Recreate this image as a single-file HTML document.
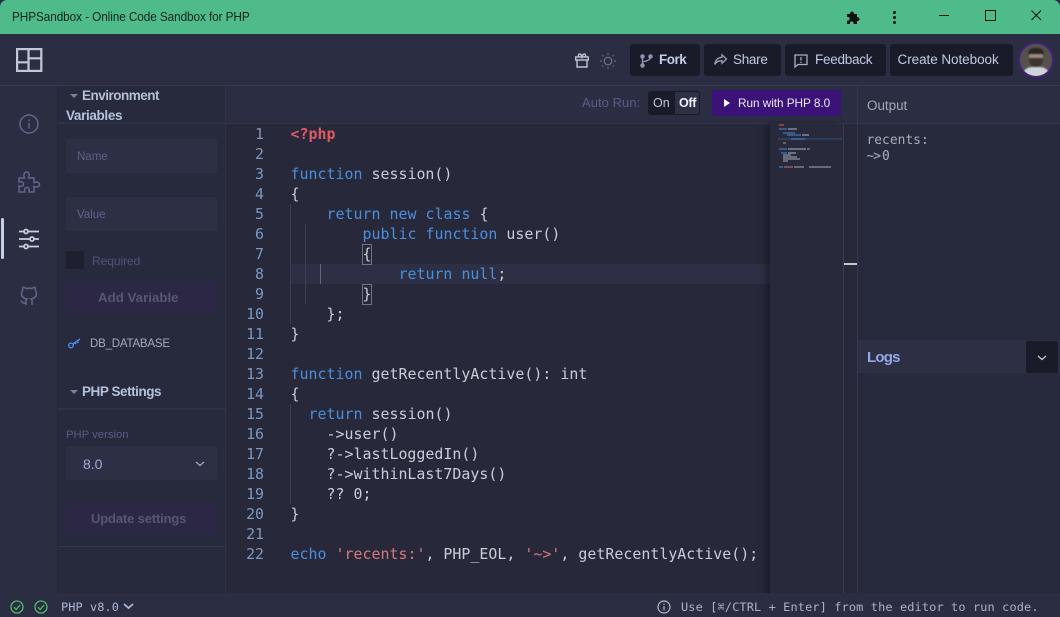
<!DOCTYPE html>
<html><head><meta charset="utf-8"><style>
html,body{margin:0;padding:0;background:#2b2e43}
body{width:1060px;height:616px;overflow:hidden;position:relative;font-family:"Liberation Sans",sans-serif}
.a{position:absolute}
.t{position:absolute;white-space:nowrap;line-height:20px}
.btn{position:absolute;top:44px;height:32px;background:#1a1b29;border-radius:3px}
.code{font-family:"DejaVu Sans Mono","Liberation Mono",monospace;font-size:14.9px;letter-spacing:.03px;white-space:pre;line-height:20px;height:20px;position:absolute;left:290.5px;color:#c9cdd8}
.n{position:absolute;width:40px;left:224px;text-align:right;font-family:"DejaVu Sans Mono",monospace;font-size:14.9px;line-height:20px;color:#7e97bd}
.k{color:#4b8fdc}
.s{color:#d9787c}
svg{position:absolute;overflow:visible}
</style></head><body>
<!-- title bar -->
<div class="a" style="left:0;top:0;width:1060px;height:34px;background:#4fbb8a;border-radius:7px 7px 0 0"></div>
<div class="t" style="left:12px;top:7px;font-size:12.6px;letter-spacing:-.1px;color:#10261d;transform:scaleX(.937);transform-origin:left center">PHPSandbox - Online Code Sandbox for PHP</div>
<svg style="left:846px;top:9px" width="16" height="16" viewBox="0 0 16 16"><path d="M1 5h3.2a1.9 1.900 0 1 1 3.600 0H11v3.300a1.900 1.900 0 1 1 0 3.600V15H7.500a1.900 1.900 0 1 0-3.500 0H1v-3.500a1.900 1.900 0 1 0 0-3.500z" fill="#111"/></svg>
<div class="a" style="left:893px;top:11px;width:3px;height:3px;background:#111;border-radius:2px;box-shadow:0 5px 0 #111,0 10px 0 #111"></div>
<div class="a" style="left:939px;top:15px;width:10px;height:1px;background:#111"></div>
<div class="a" style="left:985px;top:10px;width:9px;height:9px;border:1px solid #111"></div>
<svg style="left:1031px;top:10px" width="11" height="11"><path d="M.5.500l9.500 9.500M10 .500L.5 10" stroke="#111" fill="none"/></svg>

<!-- header -->
<div class="a" style="left:0;top:85px;width:1060px;height:1px;background:#363a50"></div>
<svg style="left:15px;top:47px" width="28" height="26"><g fill="none" stroke="#c2c8d6" stroke-width="2.200"><rect x="2.100" y="2.100" width="24.200" height="21.800"/><path d="M13.500 2v22M2 15.300h11.500M13.500 11.300h12.800"/></g></svg>
<svg style="left:575px;top:53px" width="14" height="15" viewBox="0 0 14 15"><g fill="none" stroke="#c0c5d3" stroke-width="1.400"><rect x=".7" y="4" width="12.600" height="3"/><path d="M2 7v7h10V7M4 4C2.500 2 4 .8 5 1c1.200.2 2 3 2 3s.8-2.800 2-3c1-.2 2.500 1 1 3"/></g></svg>
<svg style="left:600px;top:53px" width="16" height="16" viewBox="0 0 16 16"><g fill="none" stroke="#6f7390" stroke-width="1.200"><circle cx="8" cy="8" r="3.800"/><path d="M8 0v1.500M8 14.500V16M0 8h1.500M14.500 8H16M2.300 2.300l1 1M12.700 12.700l1 1M2.300 13.700l1-1M12.700 3.300l1-1"/></g></svg>

<div class="btn" style="left:630px;width:70px"></div>
<svg style="left:640px;top:54px" width="13" height="14" viewBox="0 0 13 14"><g fill="none" stroke="#8d92ad" stroke-width="1.500"><circle cx="2.500" cy="2.500" r="1.500" fill="#8d92ad"/><circle cx="2.500" cy="11.500" r="1.500" fill="#8d92ad"/><circle cx="10.500" cy="2.500" r="1.500" fill="#8d92ad"/><path d="M2.500 3v7M10.500 3c0 3-4 4-8 5"/></g></svg>
<div class="t" style="left:659px;top:50px;font-size:13.5px;font-weight:bold;letter-spacing:-.5px;color:#c2cfe6">Fork</div>
<div class="btn" style="left:704px;width:77px"></div>
<svg style="left:714px;top:54px" width="13" height="12" viewBox="0 0 13 12"><path d="M8 .800L12.500 5 8 9.200V6.700C5 6.600 2.500 7.500 .8 10.500 1.200 6.500 3.500 3.700 8 3.300z" fill="none" stroke="#9ba1ba" stroke-width="1.300"/></svg>
<div class="t" style="left:733px;top:50px;font-size:13.5px;letter-spacing:-.3px;color:#bfcbe2">Share</div>
<div class="btn" style="left:785px;width:101px"></div>
<svg style="left:794px;top:54px" width="14" height="14" viewBox="0 0 14 14"><path d="M1 1h12v9.500H4L1 13z" fill="none" stroke="#a9afc6" stroke-width="1.300"/><path d="M7 3v3.500M7 7.700v1.300" stroke="#a9afc6" stroke-width="1.300"/></svg>
<div class="t" style="left:815px;top:50px;font-size:13.5px;letter-spacing:-.25px;color:#bfcbe2">Feedback</div>
<div class="btn" style="left:890px;width:123px"></div>
<div class="t" style="left:897.500px;top:50px;font-size:13.5px;letter-spacing:-.06px;color:#bfcbe2">Create Notebook</div>
<div class="a" style="left:1018px;top:42px;width:32px;height:32px;border:2px solid #40227a;border-radius:50%;overflow:hidden;background:#55524e">
<div style="position:absolute;inset:0;filter:blur(.8px)">
<div class="a" style="left:9px;top:5px;width:14px;height:17px;border-radius:50%;background:#a0897c"></div>
<div class="a" style="left:8px;top:4px;width:16px;height:6px;border-radius:7px 7px 0 0;background:#2a2623"></div>
<div class="a" style="left:9px;top:14px;width:14px;height:9px;border-radius:0 0 8px 8px;background:#3f3530"></div>
<div class="a" style="left:2px;top:23px;width:28px;height:12px;border-radius:10px 10px 0 0;background:#d0d4d6"></div>
</div></div>

<!-- left nav -->
<div class="a" style="left:0;top:86px;width:58px;height:518px;background:#2b2e43"></div>
<div class="a" style="left:57px;top:86px;width:1px;height:518px;background:#24263a"></div>
<svg style="left:19px;top:114px" width="20" height="20" viewBox="0 0 20 20"><g fill="none" stroke="#62658a" stroke-width="1.500"><circle cx="10" cy="10" r="9"/><path d="M10 9v5.500M10 5.500v1.600"/></g></svg>
<svg style="left:18px;top:171px" width="22" height="22" viewBox="0 0 22 22"><path d="M1 7h5.500C5 3 6.500 1 8.500 1s3.500 2 2 6H16v4.500c3-1.300 5.500 0 5.500 2s-2.500 3.300-5.500 2V21h-5c.8-3-.3-4.500-2.200-4.500S6 18 6.800 21H1v-6c3 1 4.500-.3 4.500-2S4 10 1 11z" fill="none" stroke="#62658a" stroke-width="1.500"/></svg>
<div class="a" style="left:1px;top:218px;width:3px;height:41px;background:#c5d0e0;border-radius:2px"></div>
<svg style="left:19px;top:229px" width="20" height="20" viewBox="0 0 20 20"><g stroke="#c8d0de" stroke-width="1.700" fill="#2b2e43"><path d="M0 2.500h20M0 10h20M0 17.500h20"/><circle cx="7" cy="2.500" r="2"/><circle cx="13" cy="10" r="2"/><circle cx="7" cy="17.500" r="2"/></g></svg>
<svg style="left:20px;top:286px" width="18" height="20" viewBox="0 0 18 20"><path d="M6 19v-3.500c-.3-1 .3-2 1-2.500C4 12.500 1.500 11 1.500 7.500c0-1.300.5-2.300 1.200-3.200-.2-1-.1-2 .3-3 1.300 0 2.300.6 3.200 1.300a9 9 0 0 1 5.600 0C12.700 1.900 13.700 1.300 15 1.300c.4 1 .5 2 .3 3 .7.900 1.200 1.900 1.200 3.200 0 3.500-2.500 5-5.500 5.500.7.500 1.300 1.500 1 2.500V19M6 17c-2.500.7-4-.5-5-2.500" fill="none" stroke="#62658a" stroke-width="1.500"/></svg>

<!-- sidebar -->
<div class="a" style="left:58px;top:86px;width:167px;height:518px;background:#272a3c"></div>
<div class="a" style="left:225px;top:86px;width:1px;height:518px;background:#2f3248"></div>
<div class="a" style="left:58px;top:122px;width:167px;height:2px;background:#2e3147"></div>
<div class="a" style="left:70px;top:94px;border:4px solid transparent;border-top:4px solid #7c7f99"></div>
<div class="t" style="left:82px;top:86px;font-size:13.500px;font-weight:bold;letter-spacing:-.5px;color:#b5bfd6">Environment</div>
<div class="t" style="left:66px;top:106px;font-size:13.500px;font-weight:bold;letter-spacing:-.35px;color:#b5c3de">Variables</div>
<div class="a" style="left:66px;top:139px;width:151px;height:34px;background:#2d3045;border-radius:2px"></div>
<div class="t" style="left:77px;top:147px;font-size:11.500px;color:#5d6288">Name</div>
<div class="a" style="left:66px;top:197px;width:151px;height:34px;background:#2d3045;border-radius:2px"></div>
<div class="t" style="left:77px;top:205px;font-size:11.500px;color:#5d6288">Value</div>
<div class="a" style="left:66px;top:251px;width:18px;height:18px;background:#1e1f2f;border-radius:2px"></div>
<div class="t" style="left:92px;top:251px;font-size:12px;letter-spacing:-.05px;color:#50547a">Required</div>
<div class="a" style="left:66px;top:282px;width:151px;height:31px;background:#2b2745;border-radius:2px"></div>
<div class="t" style="left:98px;top:288px;font-size:13.300px;font-weight:bold;letter-spacing:0;color:#565870">Add Variable</div>
<svg style="left:68px;top:338px" width="13" height="11" viewBox="0 0 13 11"><g fill="none" stroke="#4d8ce8" stroke-width="1.400"><circle cx="3" cy="7.500" r="2.300"/><path d="M5 6l7-5M9 3.500l1.500 1.500M7 5l1 1"/></g></svg>
<div class="t" style="left:90px;top:334px;font-size:11.500px;letter-spacing:-.2px;color:#a3aaba">DB_DATABASE</div>
<div class="a" style="left:70px;top:390px;border:4px solid transparent;border-top:4px solid #7c7f99"></div>
<div class="t" style="left:82px;top:382px;font-size:13.500px;font-weight:bold;letter-spacing:-.45px;color:#b5c1da">PHP Settings</div>
<div class="a" style="left:58px;top:408px;width:167px;height:2px;background:#2e3147"></div>
<div class="t" style="left:66px;top:425px;font-size:11.300px;color:#575c82">PHP version</div>
<div class="a" style="left:66px;top:446px;width:151px;height:34px;background:#2d3045;border-radius:2px"></div>
<div class="t" style="left:83px;top:454px;font-size:14px;color:#a4aad6">8.0</div>
<svg style="left:195px;top:461px" width="10" height="6"><path d="M1 1l4 3.500L9 1" fill="none" stroke="#a8acc8" stroke-width="1.200"/></svg>
<div class="a" style="left:66px;top:503px;width:151px;height:31px;background:#2b2745;border-radius:2px"></div>
<div class="t" style="left:91px;top:509px;font-size:13px;font-weight:bold;letter-spacing:-.15px;color:#565870">Update settings</div>
<div class="a" style="left:58px;top:546px;width:167px;height:1px;background:#33364d"></div>

<!-- editor toolbar -->
<div class="a" style="left:226px;top:86px;width:631px;height:37px;background:#2b2e43"></div>
<div class="a" style="left:226px;top:123px;width:631px;height:1px;background:#32354b"></div>
<div class="t" style="left:582px;top:93px;font-size:13px;letter-spacing:.05px;color:#585d85">Auto Run:</div>
<div class="a" style="left:648px;top:91px;width:52px;height:24px;background:#1a1b29;border-radius:3px"></div>
<div class="a" style="left:675px;top:92px;width:24px;height:22px;background:#2e3146;border-radius:0 2px 2px 0"></div>
<div class="t" style="left:653px;top:93px;font-size:12.500px;color:#bfc7da">On</div>
<div class="t" style="left:679px;top:93px;font-size:12.500px;font-weight:bold;letter-spacing:-.3px;color:#eef1f7">Off</div>
<div class="a" style="left:712px;top:90px;width:129px;height:26px;background:#3a1278;border-radius:2px"></div>
<div class="a" style="left:724px;top:99px;border:4px solid transparent;border-left:6px solid #fff;border-right:0"></div>
<div class="t" style="left:738px;top:93px;font-size:11.800px;letter-spacing:-.05px;color:#eceaf6">Run with PHP 8.0</div>

<!-- editor -->
<div class="a" style="left:226px;top:124px;width:631px;height:480px;background:#27293b"></div>
<div class="a" style="left:291px;top:264px;width:479px;height:20px;background:#2d3044"></div>
<div class="a" style="left:290px;top:204px;width:1px;height:120px;background:#3d3f4c"></div>
<div class="a" style="left:305px;top:224px;width:1px;height:80px;background:#3d3f4c"></div>
<div class="a" style="left:320px;top:264px;width:1px;height:20px;background:#66686f"></div>
<div class="a" style="left:290px;top:404px;width:1px;height:100px;background:#3d3f4c"></div>
<div class="a" style="left:362px;top:244px;width:8px;height:19px;border:1px solid #72757a"></div>
<div class="a" style="left:362px;top:284px;width:8px;height:19px;border:1px solid #72757a"></div>

<div class="n" style="top:124px">1</div><div class="n" style="top:144px">2</div><div class="n" style="top:164px">3</div><div class="n" style="top:184px">4</div><div class="n" style="top:204px">5</div><div class="n" style="top:224px">6</div><div class="n" style="top:244px">7</div><div class="n" style="top:264px">8</div><div class="n" style="top:284px">9</div><div class="n" style="top:304px">10</div><div class="n" style="top:324px">11</div><div class="n" style="top:344px">12</div><div class="n" style="top:364px">13</div><div class="n" style="top:384px">14</div><div class="n" style="top:404px">15</div><div class="n" style="top:424px">16</div><div class="n" style="top:444px">17</div><div class="n" style="top:464px">18</div><div class="n" style="top:484px">19</div><div class="n" style="top:504px">20</div><div class="n" style="top:524px">21</div><div class="n" style="top:544px">22</div>

<div class="code" style="top:124px;color:#df5a62;font-weight:bold">&lt;?php</div>
<div class="code" style="top:164px"><span class="k">function</span> session()</div>
<div class="code" style="top:184px">{</div>
<div class="code" style="top:204px">    <span class="k">return</span> <span class="k">new</span> <span class="k">class</span> {</div>
<div class="code" style="top:224px">        <span class="k">public</span> <span class="k">function</span> user()</div>
<div class="code" style="top:244px">        {</div>
<div class="code" style="top:264px">            <span class="k">return</span> <span class="k">null</span>;</div>
<div class="code" style="top:284px">        }</div>
<div class="code" style="top:304px">    };</div>
<div class="code" style="top:324px">}</div>
<div class="code" style="top:364px"><span class="k">function</span> getRecentlyActive(): int</div>
<div class="code" style="top:384px">{</div>
<div class="code" style="top:404px">  <span class="k">return</span> session()</div>
<div class="code" style="top:424px">    -&gt;user()</div>
<div class="code" style="top:444px">    ?-&gt;lastLoggedIn()</div>
<div class="code" style="top:464px">    ?-&gt;withinLast7Days()</div>
<div class="code" style="top:484px">    ?? 0;</div>
<div class="code" style="top:504px">}</div>
<div class="code" style="top:544px"><span class="k">echo</span> <span class="s">'recents:'</span>, PHP_EOL, <span class="s">'~&gt;'</span>, getRecentlyActive();</div>

<!-- minimap -->
<div class="a" style="left:770px;top:124px;width:73px;height:480px;background:#282a3c;box-shadow:-4px 0 7px rgba(0,0,0,.35)"></div>
<div class="a" style="left:843px;top:124px;width:1px;height:480px;background:#3a3d52"></div>
<div class="a" style="left:857px;top:86px;width:1px;height:518px;background:#33364c"></div>
<div class="a" style="left:844px;top:263px;width:13px;height:2px;background:#c5c7cf"></div>
<svg style="left:779px;top:124px" width="64" height="50">
<g stroke-width="1.500">
<path d="M0 1h5" stroke="#a5474f"/>
<path d="M0 5h8" stroke="#3d6aa3"/><path d="M9 5h9" stroke="#85889a"/>
<path d="M4 9h12" stroke="#3d6aa3"/>
<path d="M8 11h14" stroke="#3d6aa3"/><path d="M23 11h7" stroke="#85889a"/>
<path d="M-1 15h64" stroke="#2c4466"/><path d="M12 15h14" stroke="#3d6aa3"/>
<path d="M4 19h3" stroke="#777"/>
<path d="M0 25h8" stroke="#3d6aa3"/><path d="M9 25h18" stroke="#85889a"/><path d="M28 25h3" stroke="#777"/>
<path d="M2 29h6" stroke="#3d6aa3"/><path d="M9 29h8" stroke="#85889a"/>
<path d="M4 31h8M4 33h14M4 35h17M4 37h5" stroke="#7d808d"/>
<path d="M0 43h4" stroke="#3d6aa3"/><path d="M5 43h9" stroke="#9a5560"/><path d="M15 43h10" stroke="#7d808d"/><path d="M30 43h22" stroke="#7d808d"/>
</g></svg>

<!-- output -->
<div class="a" style="left:858px;top:86px;width:202px;height:518px;background:#272a3c"></div>
<div class="a" style="left:858px;top:86px;width:202px;height:37px;background:#2b2e43"></div>
<div class="a" style="left:858px;top:123px;width:202px;height:1px;background:#32354b"></div>
<div class="t" style="left:867px;top:96px;font-size:13.500px;letter-spacing:-.05px;color:#a2a6b4">Output</div>
<div class="t" style="left:866.500px;top:131px;font-family:'DejaVu Sans Mono',monospace;font-size:12.900px;letter-spacing:.02px;line-height:20px;color:#a8adb9">recents:</div>
<div class="t" style="left:866.500px;top:147px;font-family:'DejaVu Sans Mono',monospace;font-size:12.900px;line-height:20px;color:#a8adb9"><span style="letter-spacing:-1px">~</span><span style="letter-spacing:1px">&gt;</span>0</div>
<div class="a" style="left:858px;top:340px;width:202px;height:33px;background:#2d3045"></div>
<div class="t" style="left:867px;top:348px;font-size:15px;font-weight:bold;letter-spacing:-.8px;color:#93a8e6">Logs</div>
<div class="a" style="left:1026px;top:341px;width:32px;height:32px;background:#1a1b29;border-radius:2px"></div>
<svg style="left:1037px;top:355px" width="10" height="6"><path d="M1 1l4 3.500L9 1" fill="none" stroke="#c5c8d4" stroke-width="1.300"/></svg>

<!-- status bar -->
<div class="a" style="left:0;top:593px;width:1060px;height:23px;background:#2b2e43"></div>
<svg style="left:10px;top:600px" width="14" height="14"><circle cx="7" cy="7" r="6" fill="none" stroke="#4fb868" stroke-width="1.300"/><path d="M4 7.200l2.200 2.200L10 5" fill="none" stroke="#4fb868" stroke-width="1.300"/></svg>
<svg style="left:34px;top:600px" width="14" height="14"><circle cx="7" cy="7" r="6" fill="none" stroke="#4fb868" stroke-width="1.300"/><path d="M4 7.200l2.200 2.200L10 5" fill="none" stroke="#4fb868" stroke-width="1.300"/></svg>
<div class="t" style="left:61px;top:597px;font-family:'DejaVu Sans Mono',monospace;font-size:11.900px;letter-spacing:.1px;color:#aab8d2">PHP v8.0</div>
<svg style="left:123px;top:603px" width="11" height="7"><path d="M1 1l4.500 4L10 1" fill="none" stroke="#aab8d2" stroke-width="1.800"/></svg>
<svg style="left:657px;top:600px" width="14" height="14"><circle cx="7" cy="7" r="6" fill="none" stroke="#b5bac8" stroke-width="1.200"/><path d="M7 6.200v4M7 3.700v1.300" stroke="#b5bac8" stroke-width="1.200"/></svg>
<div class="t" style="left:681px;top:597px;font-family:'DejaVu Sans Mono',monospace;font-size:11.900px;letter-spacing:.14px;color:#aab3c8">Use [⌘/CTRL + Enter] from the editor to run code.</div>
</body></html>
